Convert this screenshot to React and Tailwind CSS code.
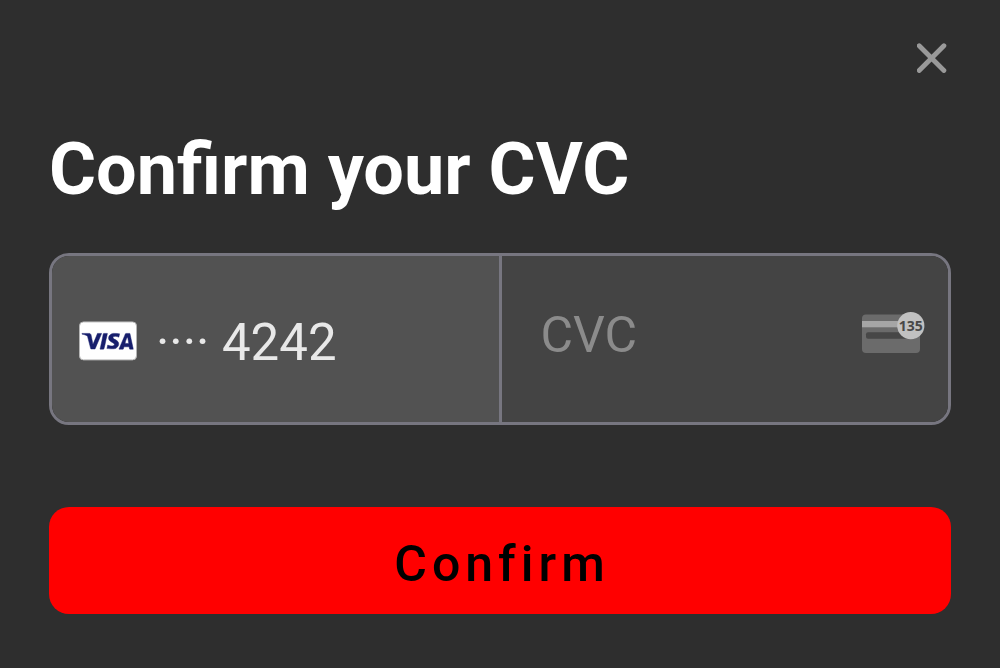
function CloseIcon() {
  return (
    <svg viewBox="0 0 30 30" className="size-[30px]" fill="none" aria-hidden="true">
      <path d="M2.2 2.7 26.9 27.5M26.9 2.7 2.2 27.5" stroke="#999999" strokeWidth="4.8" strokeLinecap="round" />
    </svg>
  );
}

function VisaCard() {
  return (
    <svg viewBox="0 0 58 40" className="h-10 w-[58px] shrink-0" role="img" aria-label="Visa">
      <rect x="0.5" y="0.9" width="57" height="38" rx="4" fill="#ffffff" stroke="#b5b5b5" />
      <g transform="translate(-7 -3.3) scale(1.965)" fill="#171e6c" stroke="#171e6c" strokeWidth="0.25">
        <path d="M28.3 10.1H28c-.4 1-.7 1.5-1 3h1.9c-.3-1.5-.3-2.2-.6-3zm2.9 5.9h-1.7c-.1 0-.1 0-.2-.1l-.2-.9-.1-.2h-2.4c-.1 0-.2 0-.2.2l-.3.9c0 .1-.1.1-.1.1h-2.1l.2-.5L27 8.7c0-.5.3-.7.8-.7h1.5c.1 0 .2 0 .2.2l1.4 6.5c.1.4.2.7.2 1.1.1.1.1.1.1.2z" />
        <path d="M17.8 15.7l.4-1.8c.1 0 .2.1.2.1.7.3 1.4.5 2.1.4.2 0 .5-.1.7-.2.5-.2.5-.7.1-1.1-.2-.2-.5-.3-.8-.5-.4-.2-.8-.4-1.1-.7-1.2-1-.8-2.4-.1-3.1.6-.4.9-.8 1.7-.8 1.2 0 2.5 0 3.1.2h.1c-.1.6-.2 1.1-.4 1.7-.5-.2-1-.4-1.5-.4-.3 0-.6 0-.9.1-.2 0-.3.1-.4.2-.2.2-.2.5 0 .7l.5.4c.4.2.8.4 1.1.6.5.3 1 .8 1.1 1.4.2.9-.1 1.7-.9 2.3-.5.4-.7.6-1.4.6-1.4 0-2.5.1-3.4-.2-.1.2-.1.2-.2.1z" />
        <path d="M14.3 16c.1-.7.1-.7.2-1 .5-2.2 1-4.5 1.4-6.7.1-.2.1-.3.3-.3H18c-.2 1.2-.4 2.1-.7 3.2-.3 1.5-.6 3-1 4.5 0 .2-.1.2-.3.3z" />
        <path d="M5 8.2c0-.1.2-.2.3-.2h3.4c.5 0 .9.3 1 .8l.9 4.4c0 .1 0 .1.1.2 0-.1.1-.1.1-.1l2.1-5.1c-.1-.1 0-.2.1-.2h2.1c0 .1 0 .1-.1.2l-3.1 7.3c-.1.2-.1.3-.2.4-.1.1-.3 0-.5 0H9.7c-.1 0-.2 0-.2-.2L7.9 9.5c-.2-.2-.5-.5-.9-.6-.6-.3-1.7-.5-1.9-.5L5 8.2z" />
      </g>
    </svg>
  );
}

function CvcIcon() {
  return (
    <svg viewBox="0 0 63 42" className="h-[42px] w-[63px] shrink-0" aria-hidden="true">
      <rect x="0" y="2.5" width="58" height="38.5" rx="4" fill="#6b6b6b" />
      <rect x="0" y="9" width="40" height="6.3" fill="#a6a6a6" />
      <rect x="4" y="20.3" width="50" height="6.5" rx="2" fill="#474747" />
      <circle cx="48.8" cy="13.7" r="13.6" fill="#c1c1c1" />
      <text x="48.8" y="19" textAnchor="middle" fontFamily="Open Sans, sans-serif" fontWeight="700" fontSize="14" fill="#484848">
        135
      </text>
    </svg>
  );
}

export default function App() {
  return (
    <main className="flex min-h-screen flex-col bg-[#2e2e2e] px-[49px] pb-[54px] font-['Roboto',sans-serif]">
      <button type="button" aria-label="Close" className="mt-[43px] mr-1 self-end">
        <CloseIcon />
      </button>
      <h1 className="mt-[53px] text-[72px] leading-[88px] font-bold text-white">Confirm your CVC</h1>
      <form className="mt-[39px]" onSubmit={(event) => event.preventDefault()}>
        <div className="grid h-[172px] grid-cols-[1fr_3px_1fr] overflow-hidden rounded-[20px] border-3 border-[#777680]">
          <div className="flex min-w-0 items-center gap-[19px] bg-[#525252] pt-1 pl-[27px] text-[#e8e8e8]">
            <VisaCard />
            <span className="pt-1 text-[51px] leading-[60px] whitespace-nowrap">···· 4242</span>
          </div>
          <div className="bg-[#777680]" />
          <div className="flex min-w-0 items-center bg-[#444444] pr-[23px] pb-2 pl-[39px]">
            <input
              type="text"
              inputMode="numeric"
              autoComplete="cc-csc"
              aria-label="CVC"
              placeholder="CVC"
              className="h-[60px] w-full min-w-0 bg-transparent text-[50px] text-[#e8e8e8] outline-none placeholder:text-[#8b8b8b]"
            />
            <span className="mb-1 shrink-0">
              <CvcIcon />
            </span>
          </div>
        </div>
        <button type="submit" className="mt-[82px] h-[107px] w-full rounded-[20px] bg-[#ff0000] pt-2 pl-1 text-[50px] font-medium tracking-[5px] text-black">
          Confirm
        </button>
      </form>
    </main>
  );
}
